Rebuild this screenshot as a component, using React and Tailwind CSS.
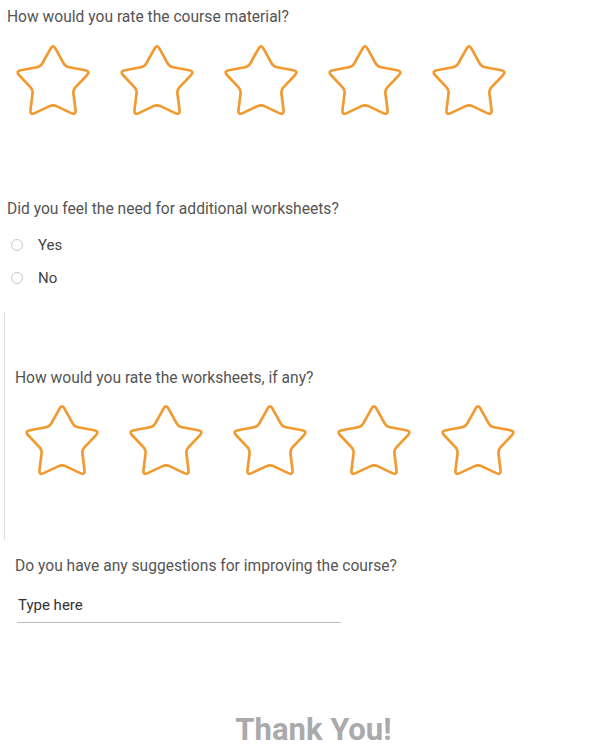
function starPath(cx, cy, R, r, round) {
  const pts = [];
  for (let i = 0; i < 10; i++) {
    const a = ((-90 + i * 36) * Math.PI) / 180;
    const rad = i % 2 === 0 ? R : r;
    pts.push([cx + rad * Math.cos(a), cy + rad * Math.sin(a)]);
  }
  let d = "";
  pts.forEach((v, i) => {
    const p = pts[(i + 9) % 10];
    const n = pts[(i + 1) % 10];
    const len = Math.hypot(p[0] - v[0], p[1] - v[1]);
    const t = (i % 2 === 0 ? round : round * 0.7) / len;
    const a = [v[0] + (p[0] - v[0]) * t, v[1] + (p[1] - v[1]) * t];
    const b = [v[0] + (n[0] - v[0]) * t, v[1] + (n[1] - v[1]) * t];
    d += `${i === 0 ? "M" : "L"}${a[0].toFixed(2)} ${a[1].toFixed(2)}Q${v[0].toFixed(2)} ${v[1].toFixed(2)} ${b[0].toFixed(2)} ${b[1].toFixed(2)}`;
  });
  return d + "Z";
}

const STAR = starPath(40, 41.5, 39.5, 21, 5.5);

function Star() {
  return (
    <svg width="80" height="80" viewBox="0 0 80 80" className="shrink-0">
      <path d={STAR} fill="none" stroke="#f19a2f" strokeWidth="2.7" strokeLinejoin="round" />
    </svg>
  );
}

function Stars({ className }) {
  return (
    <div className={`flex gap-[24px] ${className}`}>
      {[1, 2, 3, 4, 5].map((n) => (
        <Star key={n} />
      ))}
    </div>
  );
}

function Radio({ label, className = "" }) {
  return (
    <label className={`flex h-[20px] items-center ${className}`}>
      <span className="ml-[11px] h-[12px] w-[12px] rounded-full border border-[#c8c8c8] bg-white" />
      <span className="ml-[15px] text-[15px] text-[#444]">{label}</span>
    </label>
  );
}

export default function App() {
  return (
    <div className="h-[747px] w-[605px] overflow-hidden bg-white font-['Roboto',sans-serif] text-[#555]">
      <p className="pl-[7px] pt-[8px] text-[15.6px] leading-[19px]">How would you rate the course material?</p>
      <Stars className="ml-[13px] mt-[15px]" />

      <p className="mt-[78px] pl-[7px] text-[15.6px] leading-[19px]">Did you feel the need for additional worksheets?</p>
      <Radio label="Yes" className="mt-[16px]" />
      <Radio label="No" className="mt-[13px]" />

      <div className="ml-[4px] mt-[24px] h-[228px] border-l border-[#dddddd] pl-[10px]">
        <p className="pt-[57px] text-[15.6px] leading-[19px]">How would you rate the worksheets, if any?</p>
        <Stars className="ml-[7px] mt-[14px]" />
      </div>

      <p className="mt-[17px] pl-[15px] text-[15.6px] leading-[19px]">Do you have any suggestions for improving the course?</p>
      <div className="ml-[17px] mt-[20px] w-[324px] border-b border-[#bdbdbd] pb-[8px] pl-[1px] text-[15px] leading-[18px] text-[#333]">
        Type here
      </div>

      <p className="mt-[89px] pl-[22px] text-center text-[31px] font-bold leading-[36px] text-[#aaaaaa]">Thank You!</p>
    </div>
  );
}
